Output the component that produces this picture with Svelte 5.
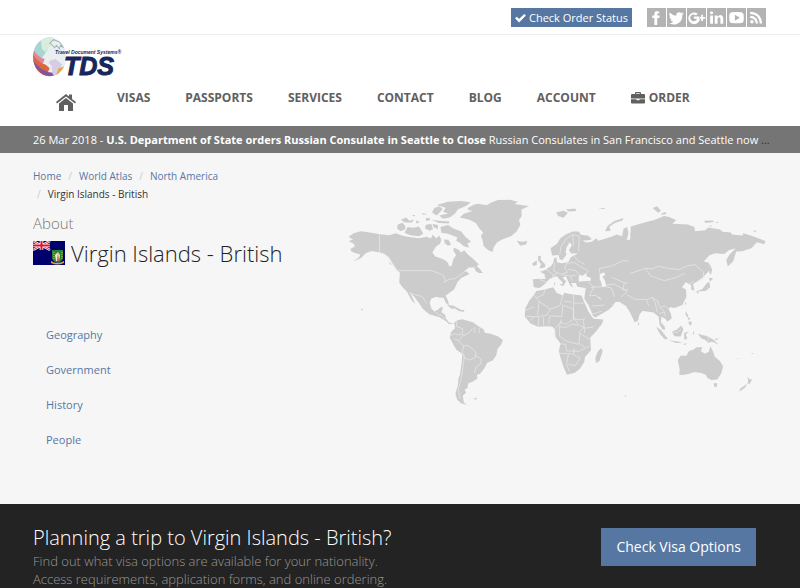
<script lang="ts">
	const socials = [
		{ name: 'Facebook', path: 'M11 3h-2q-2 0-2 2.300v1.700h-2v2.500h2v6.500h2.700v-6.500h2l.3-2.500h-2.300v-1.200q0-.9 1-.9h1.300z' },
		{
			name: 'Twitter',
			path: 'M16 5l-1.700.6 1.200-1.600-1.900.7a3 3 0 0 0-4.900 2.700q-3.500-.2-6-3.100-1.400 2.400.8 4.100l-1.200-.4q.2 2.200 2.300 3l-1.300.1q.8 1.900 2.800 2-2 1.500-4.300 1.200 3.300 1.900 7 1 5.900-1.800 5.800-8.600z'
		},
		{
			name: 'Google Plus',
			path: 'M6.500 8v2.300h3q-.6 2.100-3 2.200a3.200 3.200 0 1 1 2-5.500l1.600-1.600a5.500 5.500 0 1 0 1.900 2.600zM13.500 6.500h1.700v2h2v1.700h-2v2h-1.700v-2h-2v-1.700h2z'
		},
		{
			name: 'LinkedIn',
			path: 'M3 7h2.700v8h-2.700zM4.300 3a1.500 1.500 0 1 1 0 3 1.500 1.500 0 0 1 0-3zM7.300 7h2.600v1.200q2-2.400 4.300-1.100 1.200.8 1.200 3v4.900h-2.700v-4.500q0-1.700-1.300-1.700t-1.400 1.700v4.500h-2.700z'
		},
		{
			name: 'YouTube',
			path: 'M4.500 4q4.500-.6 9 0 2 .2 2.200 2.200.4 3 0 6-.3 1.800-2.200 2-4.500.5-9 0-2-.2-2.200-2.200-.4-3 0-6 .3-1.800 2.200-2zM7.500 6.500v5.500l4.700-2.800z'
		},
		{
			name: 'RSS',
			path: 'M4.700 11.400a1.700 1.700 0 1 1 0 3.400 1.700 1.700 0 0 1 0-3.400zM3 7.300q7 .3 7.500 7.500h-2.200q-.4-4.900-5.300-5.300zM3 3.500q10.700.5 11.300 11.300h-2.300q-.5-8.600-9-9z'
		}
	];

	const navItems = ['Visas', 'Passports', 'Services', 'Contact', 'Blog', 'Account'];
	const crumbs = ['Home', 'World Atlas', 'North America'];
	const sections = ['Geography', 'Government', 'History', 'People'];
	const country = 'Virgin Islands - British';
</script>

<div class="topbar">
	<a class="btn status" href="#status">
		<svg viewBox="0 0 12 12" aria-hidden="true"><path d="M1 6l3.500 3.500 6.500-6.500" fill="none" stroke="currentColor" stroke-width="2.600" /></svg>
		Check Order Status
	</a>
	<div class="socials">
		{#each socials as social}
			<a href="#social" aria-label={social.name}>
				<svg viewBox="0 0 18 18"><path d={social.path} fill-rule="evenodd" /></svg>
			</a>
		{/each}
	</div>
</div>

<header>
	<a class="logo" href="#home" aria-label="Travel Document Systems">
		<svg viewBox="0 0 92 40">
			<defs>
				<clipPath id="globe"><circle cx="17" cy="20" r="17" /></clipPath>
			</defs>
			<g transform="translate(0 -3) scale(0.98 1.14)">
				<circle cx="17" cy="20" r="17" fill="#e9eef0" />
				<g clip-path="url(#globe)">
					<path d="M0 0h24l-8 8-2 7-5 6-9-5z" fill="#a8d5cf" />
					<path d="M8 5l10-3 5 2-3 3-2 4-4 2-1 3-4-3z" fill="#d8eddd" />
					<path d="M17 8l4-3 6 2 4 5-3-2-1 3-3-3-2 2-2-2z" fill="none" stroke="#a6b8b5" />
					<path d="M0 13q4 7 12 9l-2 4q-7-2-10-7z" fill="#df8796" />
					<path d="M0 18q5 7 13 9l4 3-2 4q-9-3-15-10z" fill="#dd663d" />
					<path d="M0 23q8 10 20 11l8-4-3 10h-25z" fill="#80569b" />
					<path d="M1 27q8 9 17 11l-2 2q-12-2-15-9z" fill="#bc5261" />
					<path d="M18 23l5-1 7 5-4 5-3 6-3-3-1-7-3-3z" fill="#d7cce3" />
					<path d="M26 30q4 0 8-3l-4 7-6 2z" fill="#e6a34b" />
				</g>
			</g>
			<text class="tagline" x="22" y="17">Travel Document Systems®</text>
			<text class="brand" x="31" y="38">TDS</text>
		</svg>
	</a>
	<nav>
		<a class="home" href="#home" aria-label="Home">
			<svg viewBox="0 0 22 18">
				<path d="M1 9l10-8 3 2.500v-2h3v4.500l4 3-1 1.500-9-7-9 7z" />
				<path d="M4 10.500l7-5.500 7 5.500v7.500h-5v-6h-4v6h-5z" />
			</svg>
		</a>
		{#each navItems as item}
			<a href="#nav">{item}</a>
		{/each}
		<a class="order" href="#order">
			<svg viewBox="0 0 14 12"><path fill-rule="evenodd" d="M4 2v-1q0-1 1-1h4q1 0 1 1v1h3q1 0 1 1v3.500h-14v-3.500q0-1 1-1zM5.200 1.200v.8h3.600v-.8zM0 7.200h5.500v1h3v-1h5.500v3.300q0 1-1 1h-12q-1 0-1-1z" /></svg>
			Order
		</a>
	</nav>
</header>

<div class="news">
	<p>26 Mar 2018 - <a href="#news"><b>U.S. Department of State orders Russian Consulate in Seattle to Close</b> Russian Consulates in San Francisco and Seattle now</a> <span>...</span></p>
</div>

<main>
	<div class="info">
		<ol class="crumbs">
			{#each crumbs as crumb}
				<li><a href="#crumb">{crumb}</a></li>
			{/each}
			<li>{country}</li>
		</ol>
		<h1>
			<small>About</small>
			<span class="country">
				<svg viewBox="0 0 32 24" aria-hidden="true">
					<path d="M0 0h32v24h-32z" fill="#00006c" />
					<path d="M0 0l17 9M17 0l-17 9" stroke="#fff" stroke-width="2.400" />
					<path d="M0 0l17 9M17 0l-17 9" stroke="#df3040" />
					<path d="M8.500 0v9M0 4.500h17" stroke="#fff" stroke-width="3.600" />
					<path d="M8.500 0v9M0 4.500h17" stroke="#d9142b" stroke-width="2" />
					<path d="M19 9h11v8q-1 4-5.500 5-4.500-1-5.500-5z" fill="#218538" />
					<path d="M18 20q6 4 13 0v2q-7 3-13 0z" fill="#d6a738" />
					<path d="M25 11l2 3-1 6h-3l-1-6z" fill="#f4ead5" />
					<path d="M25 11l1 9h-2z" fill="#a46c35" />
					<path d="M21 11v8M29 11v8" stroke="#e2c342" stroke-dasharray="1 1" />
				</svg>
				{country}
			</span>
		</h1>
		<ul class="sections">
			{#each sections as section}
				<li><a href="#section">{section}</a></li>
			{/each}
		</ul>
	</div>

	<svg class="map" viewBox="30 22 1250 640" role="img" aria-label="World map">
		<!-- North America and Greenland -->
		<g>
			<path d="M28 153L42 150 29 141 44 130 65 124 92 128 122 133 150 136 170 130 190 138 215 142 240 145 262 141 275 146 280 134 290 145 300 138 306 150 302 162 290 170 279 188 288 200 312 208 324 216 330 230 337 227 342 207 350 196 342 182 343 174 355 178 366 188 374 181 385 194 399 205 412 218 418 224 405 233 388 233 370 248 380 244 390 252 378 258 366 263 354 276 350 286 344 298 330 308 319 317 326 332 329 346 319 338 312 323 300 323 292 320 276 325 271 338 276 355 285 364 296 359 304 351 311 352 306 366 317 373 320 386 330 398 344 400 330 402 318 392 300 381 270 372 250 356 240 340 225 320 212 309 220 323 228 342 218 332 210 318 203 305 190 292 180 278 182 248 172 240 160 222 148 202 135 192 118 187 98 183 80 190 66 204 42 215 60 202 64 194 50 190 37 185 34 177 48 169 44 162z" />
			<path d="M175 105L190 99 198 108 198 118 184 124 174 117zM205 112L222 114 239 110 252 131 240 139 213 136 196 129zM185 90L201 83 210 93 224 89 218 98 197 98zM218 76h10l-4 4zM230 92L242 96 232 102zM245 70L264 73 253 75zM260 85L272 85 270 93 259 92zM278 68L285 55 300 50 310 58 300 69 292 77zM260 105L276 103 281 118 271 123 257 116zM276 90L300 93 330 95 328 101 299 100zM280 103L296 106 295 118 282 112z" />
			<path d="M292 46L325 36 364 34 394 38 381 48 355 59 347 71 331 83 310 87 300 77 326 71 311 66 319 54zM303 112L326 106 342 116 365 125 379 142 395 155 384 161 389 174 373 169 361 159 350 153 354 143 337 136 325 132 306 129zM314 149L327 150 335 164 326 168 316 160z" />
			<path d="M385 55L402 45 415 42 442 47 452 40 475 31 510 30 534 36 525 43 548 47 568 49 545 59 546 79 538 91 542 105 530 126 514 139 486 150 472 158 462 173 459 186 445 180 432 168 429 151 424 138 431 128 420 117 409 100 390 90 361 83 373 72 399 64 385 60zM67 356h4v4h-4zM148 215L157 222 154 225zM327 346L341 346 363 358 355 360 342 352zM359 358L376 360 370 366zM404 234L412 228 421 237 430 249 418 249 409 244z" />
			<path class="border" d="M121 133v54l14 5 14 10 25 40h102l20 7 17 8 5 14-5 6 16-9 16-2 14-8 12-10M210 308l22 7 17 5 14 20M288 365l11 10 6-1 12 13" />
		</g>

		<!-- South America -->
		<g transform="translate(270 330)">
			<path d="M74 68L84 60 98 57 112 61 130 66 149 80 162 87 166 98 181 100 206 109 220 120 215 132 204 146 200 165 190 180 173 187 165 203 151 221 142 223 144 234 129 244 116 249 114 263 105 268 110 276 100 286 103 306 113 313 96 309 83 298 78 280 85 256 87 235 92 220 97 185 98 160 80 148 70 130 61 112 66 94 77 84zM130 295l11-3 0 6zM52 15l15 3 10 9-12-2zM80 28l19 2-7 4z" />
			<path class="border" d="M82 61l-1 17 19 8-2 15-12 3-10-4-12 6M98 101l5 5 17-9 9-13M103 103l-16 18-14-6M87 121l15 16-4 24M102 137l14-1 23 19-3 18-17 6-13-6-4-13M139 165l16 12-1 13-15 11-4 18M101 163l3 10-4 31-5 31-8 30 5 30M136 80v18M149 82v17" />
		</g>

		<!-- Africa -->
		<g transform="translate(540 270)">
			<path d="M40 48L50 33 75 28 100 22 110 38 128 46 134 38 150 42 185 46 190 60 205 93 220 116 250 118 246 131 226 156 211 172 212 195 213 210 195 230 193 244 181 264 165 277 141 283 132 262 123 236 117 213 122 190 107 170 106 150 98 140 81 138 55 140 32 130 15 108 17 84 30 60zM243 203L248 212 238 243 228 248 226 232 233 214zM313 344l6 1-2 4z" />
			<path class="border" d="M40 42l18 22 34 23 28-10 10-34M58 64l-5 42M18 90l25-10M20 109l32 1 29-5 11-18M32 121l12-11M55 139l2-29M72 137l-2-26M86 132l4-25 36 2 2-34 33 12v30l-24 15-15-6-17 19-3 18M161 42v72l15 5 20-3M161 69h38M160 110l16 24 20 10 25-4M125 117l-7 23 23 1 13-9 20 3M118 140l1 28 23 16 35 8 3-40 15-13M116 190l21 2 3 20 38 1 17-9M117 219l45 2v-18M146 221l-6 30 8 21M146 252l20 4 15-22-20-11M180 160l31 18M180 190l16 12 13-3M190 118l4 40M133 64l24 2M75 28l-3 15-23 11" />
		</g>

		<!-- Europe, Russia and the Middle East -->
		<g transform="translate(480)">
			<path d="M102 292L99 268 119 266 137 267 134 253 121 245 136 240 153 229 160 219 163 205 170 202 171 217 185 220 205 217 213 202 224 196 234 191 214 191 207 181 216 166 209 157 200 173 197 187 200 194 188 210 180 209 176 195 157 197 152 175 172 161 181 146 197 134 219 125 236 125 243 135 265 138 276 148 261 152 248 151 258 158 276 156 288 145 295 153 334 141 350 134 366 139 370 117 381 112 385 130 380 150 393 150 391 130 404 117 432 108 450 95 480 95V355L440 330 420 328 385 331 350 330 341 343 312 345 300 323 287 315 303 330 320 335 341 345 326 359 286 382 278 376 265 345 253 326 257 294 232 290 228 279 214 279 220 294 210 285 198 259 188 263 199 274 190 288 179 284 190 280 170 258 150 266 133 284 119 294z" />
			<path d="M51 153L69 156 82 153 80 163 62 168zM98 220L111 211 111 225 99 228zM115 197L124 200 122 209 136 223 136 232 119 236 124 222 115 212zM169 68L190 63 204 69 191 84 175 79zM197 59L226 56 229 64 207 65zM294 57l19-3 2 4zM315 124L323 108 343 94 370 85 367 92 344 100 328 111 332 123zM163 277l4 1-3 12z" />
			<path class="water" d="M236 265L238 254 248 257 259 249 260 259 273 264 272 272 249 274 237 275zM299 253L312 247 316 254 307 260 314 270 319 289 307 292 304 279 299 268z" />
			<path class="border" d="M180 194l3-22 15-24 20-14 20 5-2 45M218 134l3 34M119 268l20 8M139 238l20 15 4 14M165 219l-4 24 22 10 20-6-9-13 8-16M173 249l-15 9M201 220l24-2 13 10 28 15-12 11M204 238l24 4 10 13M187 255l25 3 18-3M212 258l5 14M218 193l15 18 21 12M300 250l-3-14 38-8 34-16 42 4 37 25 32 0M319 285l24-3 32 19 24-17 52-5M335 262l36 16 20 2 20-16 29-2 14-22M373 279l-6 20 24 3 10-23M345 325l-11-31-16-4M351 330l32-26 28-5-14 33M264 275l18 16-14 26 20-1M272 292l34-2M275 348l38-3M264 343l13 29 28-9" />
		</g>
		<g transform="translate(900)">
			<path d="M-28 110L18 97 43 91 71 79 86 82 108 91 96 102 143 104 162 112 164 124 194 121 203 113 239 119 246 126 271 128 274 134 306 137 308 130 337 139 375 154 370 163 349 157 332 175 305 184 287 185 278 214 262 230 257 210 267 194 285 176 266 180 251 192 224 190 207 196 190 215 204 218 209 239 186 263 168 276 158 282 162 301 153 299 152 285 136 277 125 292 137 298 138 321 126 345 102 354 84 350 60 370-40 355z" />
			<path d="M37 55L51 50 62 63 54 69zM63 71l12-4 4 6-16 2zM191 93l26-1 3 5-25 3zM225 96l11 2-7 2zM204 108l10-1-1 4zM337 123l12-1-7 5zM207 219l8 20-4 16-5-8zM205 263l13 2-9 10zM207 276L209 292 195 303 168 304 186 297 199 279zM168 303l7 2-4 7z" />
			<path class="border" d="M-30 251l45-16 20 2 20-8 27 6 36 4 18-10 28-5 24 22 3 19-18 14M15 235l15 22 42 15 35-9 27-14M160 274l-13 8" />
		</g>

		<!-- India, South-East Asia and Oceania -->
		<g transform="translate(870 270)">
			<path d="M-50 50H130L126 70 115 88 122 101 124 115 111 125 105 116 93 110 92 126 103 139 105 149 96 147 88 133 85 109 73 100 68 84 55 77 38 91 28 103 24 120 14 127 0 98-10 80-31 66-50 65z" />
			<path d="M23 125l5 7-4 3zM78 140L93 150 113 176 103 177 88 160zM114 180L143 184 157 187 138 188zM125 153L139 149 153 136 159 147 151 169 132 168zM161 158l15-4-10 9 5 11-9 5zM167 93L174 108 171 113 165 102zM174 124l11 1-3 11-6-3zM174 111l7 5-9 4zM163 69l5-2-2 9zM202 160L215 164 229 167 248 178 264 193 244 184 233 188 225 179 212 174zM251 176l14-2-7 6zM269 175l9 4zM288 187l8 6zM188 154h3v9h-3zM158 191l13-2-8 5z" />
			<path d="M142 239L151 226 168 226 176 212 190 208 198 201 216 201 211 213 224 220 235 214 240 197 248 214 253 229 268 242 278 258 272 279 260 297 243 299 231 293 226 283 212 278 192 275 174 281 157 284 147 283 148 267zM250 308l11 1-4 12-6-3zM350 288l8 9 7-1-7 13-8 2 3-10zM349 310L344 321 327 333 328 326zM317 232l8 3-2 2zM360 220l8-2 0 3z" />
			<path class="border" d="M-10 44l24 14 39 0 12-7 10 17 6 28M49 60l7 17M65 52l17 10 6 20 12 8 5 18M89 82l14-5 14 10M86 100l18-4M126 154l14 3 12-10M233 167v18" />
		</g>
	</svg>
</main>

<section class="planning">
	<div>
		<h2>Planning a trip to Virgin Islands - British?</h2>
		<p>Find out what visa options are available for your nationality.<br />Access requirements, application forms, and online ordering.</p>
	</div>
	<a class="btn visa" href="#visa">Check Visa Options</a>
</section>

<style>
	:global(body) {
		margin: 0;
		background: #f6f6f6;
		color: #333;
		font-family: 'Open Sans', sans-serif;
	}

	:global(*) {
		box-sizing: border-box;
	}

	a {
		color: #5777a3;
		text-decoration: none;
	}

	.topbar {
		display: flex;
		justify-content: flex-end;
		align-items: center;
		gap: 15px;
		height: 35px;
		padding: 0 34px;
		background: #fff;
		border-bottom: 1px solid #eee;
	}

	.btn {
		background: #5777a3;
		color: #fff;
		white-space: nowrap;
	}

	.status {
		display: flex;
		align-items: center;
		gap: 3px;
		padding: 0 4px;
		font-size: 11px;
		line-height: 19px;
	}

	.status svg {
		width: 11px;
		height: 11px;
	}

	.socials {
		display: flex;
		gap: 1px;
	}

	.socials a {
		width: 19px;
		height: 19px;
		background: #b3b3b3;
	}

	.socials svg {
		display: block;
		fill: #fff;
	}

	header {
		padding: 2px 33px 0;
		height: 91px;
		background: #fff;
	}

	.logo {
		display: block;
		width: 92px;
		height: 40px;
	}

	.logo svg {
		display: block;
	}

	.logo text {
		font-family: 'Liberation Sans', sans-serif;
		font-style: italic;
		font-weight: 700;
		fill: #17275b;
	}

	.tagline {
		font-size: 5px;
	}

	.brand {
		font-size: 25px;
		stroke: #17275b;
		stroke-width: 1px;
	}

	nav {
		display: flex;
		align-items: center;
		gap: 35px;
		padding-left: 22px;
		color: #606060;
		font-size: 12px;
		font-weight: 700;
		line-height: 42px;
		text-transform: uppercase;
	}

	nav a {
		color: inherit;
	}

	nav svg {
		fill: currentColor;
	}

	.home {
		display: flex;
		align-items: center;
		width: 27px;
		padding-top: 8px;
	}

	.home svg {
		width: 22px;
		height: 18px;
	}

	.order {
		display: flex;
		align-items: center;
		gap: 4px;
	}

	.order svg {
		width: 14px;
		height: 12px;
	}

	.news {
		padding: 0 20px 0 33px;
		background: #757575;
		color: #fff;
		font-size: 11px;
		line-height: 27px;
	}

	.news p {
		margin: 0;
		overflow: hidden;
		white-space: nowrap;
	}

	.news a {
		color: inherit;
	}

	.news span {
		color: #333;
	}

	main {
		display: flex;
		justify-content: space-between;
		align-items: flex-start;
		padding: 14px 33px 47px;
	}

	.info {
		width: 250px;
	}

	.crumbs {
		display: flex;
		flex-wrap: wrap;
		margin: 0;
		padding: 0;
		font-size: 10px;
		line-height: 18px;
		list-style: none;
	}

	.crumbs li + li::before {
		content: '/';
		padding: 0 7px;
		color: #ccc;
	}

	.crumbs li:last-child::before {
		padding-left: 4px;
	}

	h1 {
		margin: 8px 0 0;
		color: #222;
		font-size: 22px;
		font-weight: 300;
		line-height: 36px;
	}

	h1 small {
		display: block;
		color: #777;
		font-size: 15px;
		line-height: 24px;
	}

	.country {
		display: flex;
		align-items: center;
		gap: 6px;
		white-space: nowrap;
	}

	.country svg {
		flex: none;
		width: 32px;
		height: 24px;
	}

	.sections {
		margin: 46px 0 0;
		padding: 0 13px;
		font-size: 11px;
		line-height: 35px;
		list-style: none;
	}

	.map {
		width: 57%;
		margin: 30px 0 0;
		fill: #ccc;
	}

	.map .border {
		fill: none;
		stroke: #ececec;
		stroke-width: 2;
	}

	.map .water {
		fill: #f6f6f6;
	}

	.planning {
		display: flex;
		justify-content: space-between;
		align-items: flex-start;
		padding: 20px 44px 0 33px;
		background: #232323;
		color: #999;
		font-weight: 300;
	}

	h2 {
		margin: 0;
		color: #fff;
		font-size: 20px;
		font-weight: 300;
		line-height: 28px;
	}

	.planning p {
		margin: 0;
		font-size: 13px;
		line-height: 18px;
	}

	.visa {
		margin-top: 4px;
		padding: 0 15px;
		font-size: 14px;
		font-weight: 400;
		line-height: 38px;
	}
</style>
